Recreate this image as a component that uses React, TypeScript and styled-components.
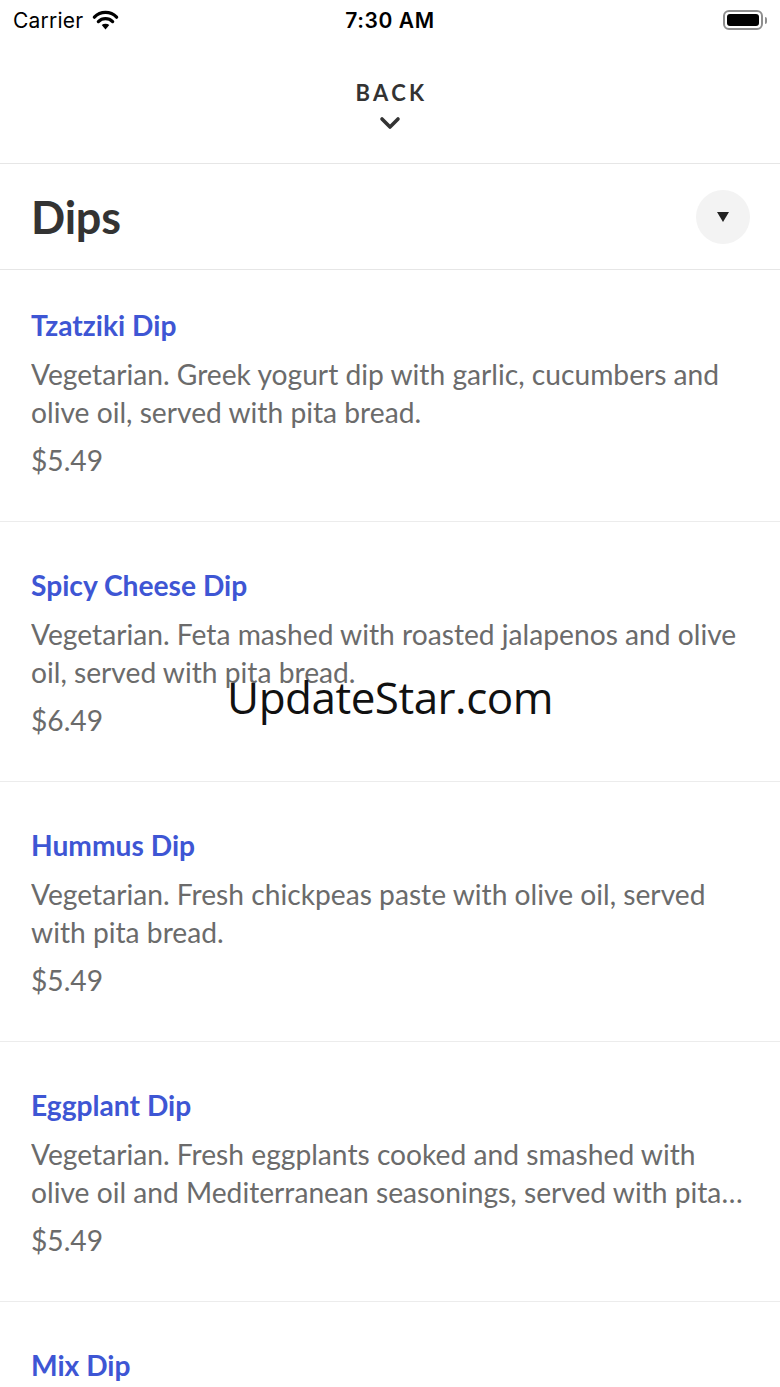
import styled, { createGlobalStyle } from "styled-components";

const GlobalStyle = createGlobalStyle`
  html, body {
    margin: 0;
    padding: 0;
    background: #ffffff;
  }
  * {
    box-sizing: border-box;
  }
`;

const Screen = styled.div`
  position: relative;
  width: 780px;
  height: 1387px;
  overflow: hidden;
  background: #ffffff;
  font-family: Lato, "Noto Sans", sans-serif;
`;

const StatusBar = styled.div`
  height: 40px;
  display: grid;
  grid-template-columns: 1fr auto 1fr;
  align-items: center;
  padding: 0 13px;
  font-family: Inter, Roboto, "Liberation Sans", sans-serif;
  color: #000;
`;

const Carrier = styled.div`
  display: flex;
  align-items: center;
  gap: 9px;
  font-size: 21px;
  letter-spacing: 0.2px;
`;

const Clock = styled.div`
  font-size: 21px;
  font-weight: 600;
  letter-spacing: 0.6px;
`;

const Battery = styled.div`
  justify-self: end;
  display: flex;
  align-items: center;
  gap: 2px;
`;

const BatteryBody = styled.div`
  width: 40px;
  height: 20px;
  border: 2px solid #8e8e8e;
  border-radius: 6px;
  padding: 2px;

  &::after {
    content: "";
    display: block;
    width: 100%;
    height: 100%;
    background: #000;
    border-radius: 3px;
  }
`;

const BatteryCap = styled.div`
  width: 2px;
  height: 7px;
  background: #8e8e8e;
  border-radius: 0 2px 2px 0;
`;

const BackBar = styled.div`
  height: 124px;
  display: flex;
  flex-direction: column;
  align-items: center;
  padding-top: 40px;
  border-bottom: 1.5px solid #e6e6e6;
`;

const BackLabel = styled.div`
  font-size: 22px;
  font-weight: 700;
  letter-spacing: 3.3px;
  color: #333;
  line-height: 26px;
  padding-left: 3px;
`;

const Chevron = styled.svg`
  margin-top: 10px;
`;

const CategoryHeader = styled.div`
  height: 106px;
  display: flex;
  align-items: center;
  justify-content: space-between;
  padding: 0 30px 0 31px;
  border-bottom: 1.5px solid #e6e6e6;
`;

const CategoryTitle = styled.h1`
  margin: 0;
  font-size: 45px;
  font-weight: 700;
  color: #333;
  letter-spacing: -0.2px;
`;

const DropButton = styled.div`
  width: 54px;
  height: 54px;
  border-radius: 50%;
  background: #f3f3f3;
  display: flex;
  align-items: center;
  justify-content: center;
`;

const List = styled.div`
  display: flex;
  flex-direction: column;
`;

const Item = styled.div<{ $first?: boolean }>`
  height: ${(p) => (p.$first ? 252 : 260)}px;
  padding: ${(p) => (p.$first ? 37 : 45)}px 32px 0 31px;
  border-bottom: 1.5px solid #ececec;
`;

const ItemName = styled.div`
  font-size: 28.2px;
  font-weight: 700;
  color: #3e56d4;
  line-height: 36px;
`;

const ItemDesc = styled.div`
  margin-top: 12px;
  font-size: 28.2px;
  line-height: 38px;
  color: #6b6b6b;
  display: -webkit-box;
  -webkit-line-clamp: 2;
  -webkit-box-orient: vertical;
  overflow: hidden;
`;

const ItemPrice = styled.div`
  margin-top: 10px;
  font-size: 28.2px;
  line-height: 38px;
  color: #6b6b6b;
`;

const Watermark = styled.div`
  position: absolute;
  left: 0;
  right: 0;
  top: 667px;
  text-align: center;
  font-family: "Open Sans", "Noto Sans", sans-serif;
  font-size: 44px;
  color: #111;
  letter-spacing: -0.5px;
  pointer-events: none;
`;

const items = [
  {
    name: "Tzatziki Dip",
    desc: "Vegetarian. Greek yogurt dip with garlic, cucumbers and olive oil, served with pita bread.",
    price: "$5.49",
  },
  {
    name: "Spicy Cheese Dip",
    desc: "Vegetarian. Feta mashed with roasted jalapenos and olive oil, served with pita bread.",
    price: "$6.49",
  },
  {
    name: "Hummus Dip",
    desc: "Vegetarian. Fresh chickpeas paste with olive oil, served with pita bread.",
    price: "$5.49",
  },
  {
    name: "Eggplant Dip",
    desc: "Vegetarian. Fresh eggplants cooked and smashed with olive oil and Mediterranean seasonings, served with pita bread.",
    price: "$5.49",
  },
  {
    name: "Mix Dip",
    desc: "Vegetarian. Tzatziki, spicy cheese, hummus and eggplant dips, served with pita bread.",
    price: "$8.49",
  },
];

const WifiIcon = () => (
  <svg width="27" height="20" viewBox="0 0 24 18">
    <path d="M12 17.5 L8.6 13.6 A5 5 0 0 1 15.4 13.6 Z" fill="#000" />
    <path
      d="M5.6 10.4 A9 9 0 0 1 18.4 10.4"
      stroke="#000"
      strokeWidth="3"
      fill="none"
      strokeLinecap="round"
    />
    <path
      d="M2 6.4 A14 14 0 0 1 22 6.4"
      stroke="#000"
      strokeWidth="3"
      fill="none"
      strokeLinecap="round"
    />
  </svg>
);

export default function App() {
  return (
    <>
      <GlobalStyle />
      <Screen>
        <StatusBar>
          <Carrier>
            Carrier
            <WifiIcon />
          </Carrier>
          <Clock>7:30 AM</Clock>
          <Battery>
            <BatteryBody />
            <BatteryCap />
          </Battery>
        </StatusBar>

        <BackBar>
          <BackLabel>BACK</BackLabel>
          <Chevron width="22" height="14" viewBox="0 0 22 14">
            <path
              d="M3 3 L11 11 L19 3"
              stroke="#333"
              strokeWidth="3.6"
              fill="none"
              strokeLinecap="round"
              strokeLinejoin="round"
            />
          </Chevron>
        </BackBar>

        <CategoryHeader>
          <CategoryTitle>Dips</CategoryTitle>
          <DropButton>
            <svg width="12" height="10" viewBox="0 0 12 10">
              <path d="M0 0 H12 L6 10 Z" fill="#222" />
            </svg>
          </DropButton>
        </CategoryHeader>

        <List>
          {items.map((item, i) => (
            <Item key={item.name} $first={i === 0}>
              <ItemName>{item.name}</ItemName>
              <ItemDesc>{item.desc}</ItemDesc>
              <ItemPrice>{item.price}</ItemPrice>
            </Item>
          ))}
        </List>

        <Watermark>UpdateStar.com</Watermark>
      </Screen>
    </>
  );
}
